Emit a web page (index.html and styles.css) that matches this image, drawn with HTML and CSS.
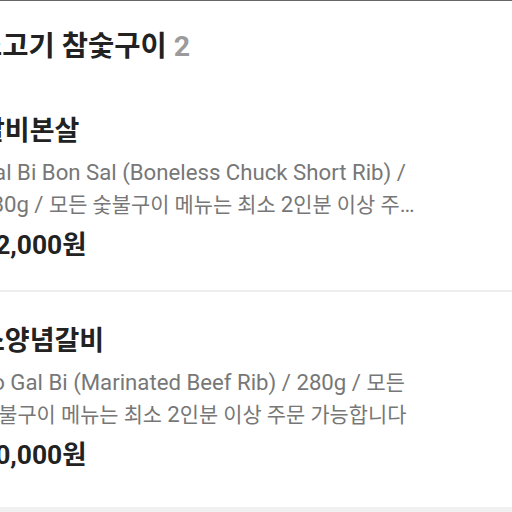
FILE: index.html
```html
<!DOCTYPE html>
<html lang="ko">
<head>
<meta charset="utf-8">
<link rel="stylesheet" href="styles.css">
</head>
<body>
<div class="topline"></div>
<div class="page">
  <h2 class="section-title">소고기 참숯구이 <span class="count">2</span></h2>
  <div class="item">
    <div class="item-name">갈비본살</div>
    <div class="item-desc">Gal Bi Bon Sal (Boneless Chuck Short Rib) / 280g / <span class="ko">모든 숯불구이 메뉴는 최소 </span>2<span class="ko">인분 이상 주문 가능합니다</span></div>
    <div class="item-price">32,000원</div>
  </div>
  <div class="divider"></div>
  <div class="item item-last">
    <div class="item-name">소양념갈비</div>
    <div class="item-desc">So Gal Bi (Marinated Beef Rib) / 280g / <span class="ko">모든 숯불구이 메뉴는 최소 </span>2<span class="ko">인분 이상 주문 가능합니다</span></div>
    <div class="item-price">30,000원</div>
  </div>
</div>
<div class="bottomband"></div>
</body>
</html>
```

FILE: styles.css
```css
html, body {
  margin: 0;
  padding: 0;
  background: #ffffff;
}
body {
  width: 512px;
  height: 512px;
  overflow: hidden;
  font-family: Roboto, "Noto Sans CJK KR", sans-serif;
  color: #222222;
}
.topline {
  height: 1px;
  background: #666666;
}
.page {
  margin-left: -20px;
  width: 445px;
}
.section-title {
  margin: 0 0 0 -4px;
  padding-top: 26px;
  font-size: 28.5px;
  line-height: 40px;
  font-weight: 700;
  color: #222222;
  white-space: nowrap;
}
.count {
  color: #9b9b9b;
}
.item {
  padding-top: 46px;
  padding-bottom: 27.5px;
}
.item-last {
  padding-top: 31px;
  padding-bottom: 34.5px;
}
.item-name {
  font-size: 27px;
  line-height: 36px;
  font-weight: 700;
  color: #222222;
  white-space: nowrap;
}
.item-desc {
  margin: 7px 0 0 -1px;
  font-size: 22.2px;
  line-height: 32px;
  color: #777777;
  word-break: keep-all;
  display: -webkit-box;
  -webkit-box-orient: vertical;
  -webkit-line-clamp: 2;
  overflow: hidden;
}
.ko {
  font-size: 0.94em;
  line-height: 1;
}
.item-price {
  margin-top: 6.5px;
  font-size: 26.4px;
  line-height: 36px;
  font-weight: 700;
  color: #222222;
  white-space: nowrap;
}
.divider {
  width: 512px;
  margin-left: 20px;
  height: 2px;
  background: #eeeeee;
}
.bottomband {
  height: 10px;
  background: #f1f1f1;
}
```
